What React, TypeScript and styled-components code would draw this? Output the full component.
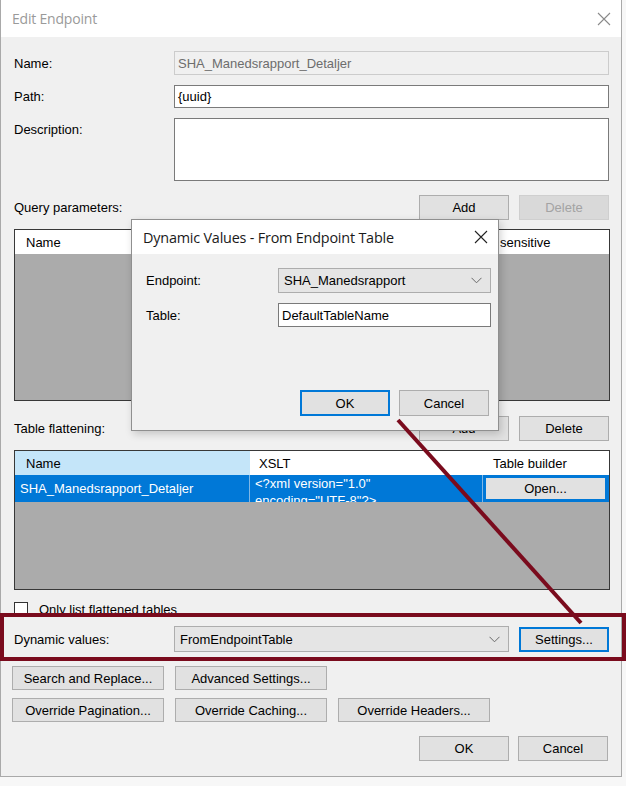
import React from "react";
import styled, { createGlobalStyle, css } from "styled-components";

const Global = createGlobalStyle`
  html, body { margin: 0; padding: 0; }
  body {
    background: #f7f7f7;
    font-family: "Liberation Sans", Arial, sans-serif;
    font-size: 13px;
    color: #000;
    width: 626px;
    height: 786px;
    overflow: hidden;
  }
  * { box-sizing: border-box; }
`;

const Stage = styled.div`
  position: relative;
  width: 626px;
  height: 786px;
`;

const Window = styled.div`
  width: 622px;
  height: 777px;
  background: #f0f0f0;
  border: 1px solid #a9a9a9;
  border-top: none;
  display: flex;
  flex-direction: column;
`;

const TitleBar = styled.div<{ $h: number }>`
  height: ${(p) => p.$h}px;
  background: #ffffff;
  display: flex;
  align-items: center;
  justify-content: space-between;
  padding: 0 10px 0 11px;
  flex-shrink: 0;
`;

const TitleText = styled.div<{ $dim?: boolean }>`
  font-family: "Open Sans", "Noto Sans", sans-serif;
  font-size: ${(p) => (p.$dim ? 14 : 14.4)}px;
  color: ${(p) => (p.$dim ? "#9a9a9a" : "#1a1a1a")};
  letter-spacing: -0.2px;
`;

const Body = styled.div`
  padding: 14px 12px 0 13px;
  display: flex;
  flex-direction: column;
`;

const FieldGrid = styled.div`
  display: grid;
  grid-template-columns: 160px 1fr;
  row-gap: 10px;
  align-items: center;
`;

const Label = styled.div<{ $top?: boolean }>`
  align-self: ${(p) => (p.$top ? "start" : "center")};
  padding-top: ${(p) => (p.$top ? "4px" : "0")};
`;

const TextBox = styled.div<{ $h: number; $disabled?: boolean }>`
  height: ${(p) => p.$h}px;
  border: 1px solid ${(p) => (p.$disabled ? "#cccccc" : "#7a7a7a")};
  background: ${(p) => (p.$disabled ? "#f0f0f0" : "#ffffff")};
  color: ${(p) => (p.$disabled ? "#6d6d6d" : "#000")};
  padding: 0 3px;
  display: flex;
  align-items: center;
  white-space: nowrap;
  overflow: hidden;
`;

const SectionHeader = styled.div<{ $mt: number }>`
  margin-top: ${(p) => p.$mt}px;
  display: flex;
  align-items: center;
  justify-content: space-between;
`;

const ButtonGroup = styled.div<{ $gap?: number }>`
  display: flex;
  gap: ${(p) => p.$gap ?? 10}px;
`;

const Button = styled.div<{ $w: number; $h?: number; $focus?: boolean; $disabled?: boolean }>`
  width: ${(p) => p.$w}px;
  height: ${(p) => p.$h ?? 25}px;
  background: #e1e1e1;
  border: 1px solid #adadad;
  display: flex;
  align-items: center;
  justify-content: center;
  white-space: nowrap;
  color: #000;
  ${(p) =>
    p.$focus &&
    css`
      border: 2px solid #0078d7;
    `}
  ${(p) =>
    p.$disabled &&
    css`
      background: #d9d9d9;
      border-color: #cfcfcf;
      color: #a3a3a3;
    `}
`;

const ListBox = styled.div<{ $mt: number; $h: number }>`
  margin-top: ${(p) => p.$mt}px;
  height: ${(p) => p.$h}px;
  margin-right: -1px;
  border: 1px solid #383838;
  background: #ababab;
  display: flex;
  flex-direction: column;
  overflow: hidden;
`;

const HeaderRow = styled.div`
  display: flex;
  height: 24px;
  background: #ffffff;
  flex-shrink: 0;
`;

const HeaderCell = styled.div<{ $w: number; $pl: number; $active?: boolean }>`
  width: ${(p) => p.$w}px;
  flex-shrink: 0;
  padding-left: ${(p) => p.$pl}px;
  display: flex;
  align-items: center;
  background: ${(p) => (p.$active ? "#c4e5f9" : "#ffffff")};
  white-space: nowrap;
  overflow: hidden;
`;

const DataRow = styled.div`
  display: flex;
  height: 27px;
  background: #0078d7;
  color: #ffffff;
  flex-shrink: 0;
`;

const DataCell = styled.div<{ $w: number; $pl: number; $sep?: boolean }>`
  width: ${(p) => p.$w}px;
  flex-shrink: 0;
  padding-left: ${(p) => p.$pl}px;
  display: flex;
  align-items: center;
  border-right: ${(p) => (p.$sep ? "1px solid #7fb7e6" : "none")};
  white-space: nowrap;
  overflow: hidden;
`;

const XsltCell = styled.div<{ $w: number }>`
  width: ${(p) => p.$w}px;
  flex-shrink: 0;
  padding-left: 5px;
  line-height: 17px;
  border-right: 1px solid #7fb7e6;
  overflow: hidden;
  white-space: pre;
`;

const CellButtonWrap = styled.div`
  flex: 1;
  padding: 1px;
  display: flex;
`;

const CheckRow = styled.div`
  margin-top: 11px;
  height: 16px;
  display: flex;
  align-items: center;
  gap: 11px;
`;

const CheckBox = styled.div`
  width: 14px;
  height: 14px;
  border: 1px solid #333333;
  background: #ffffff;
`;

const DynamicRow = styled.div`
  margin-top: 9px;
  display: grid;
  grid-template-columns: 150px 335px 90px;
  column-gap: 10px;
  align-items: center;
`;

const Combo = styled.div<{ $h: number }>`
  height: ${(p) => p.$h}px;
  background: #e5e5e5;
  border: 1px solid #adadad;
  display: flex;
  align-items: center;
  justify-content: space-between;
  padding: 0 8px 0 5px;
  white-space: nowrap;
`;

const ActionRow = styled.div<{ $mt: number }>`
  margin-top: ${(p) => p.$mt}px;
  margin-left: -2px;
  display: flex;
  gap: 11px;
`;

const FooterRow = styled.div`
  margin-top: 14px;
  display: flex;
  justify-content: flex-end;
  gap: 9px;
  padding-right: 1px;
`;

/* Child dialog */
const Dialog = styled.div`
  position: absolute;
  left: 131px;
  top: 219px;
  width: 368px;
  height: 212px;
  background: #f0f0f0;
  border: 1px solid #8f8f8f;
  box-shadow: 2px 3px 8px rgba(0, 0, 0, 0.18);
  display: flex;
  flex-direction: column;
  z-index: 5;
`;

const DialogBody = styled.div`
  flex: 1;
  padding: 14px 7px 14px 14px;
  display: flex;
  flex-direction: column;
`;

const DialogGrid = styled.div`
  display: grid;
  grid-template-columns: 132px 1fr;
  row-gap: 10px;
  align-items: center;
`;

const DialogFooter = styled.div`
  margin-top: auto;
  display: flex;
  justify-content: flex-end;
  gap: 9px;
  padding-right: 2px;
`;

const Overlay = styled.svg`
  position: absolute;
  left: 0;
  top: 0;
  pointer-events: none;
  z-index: 10;
`;

const CloseIcon = ({ color }: { color: string }) => (
  <svg width="14" height="14" viewBox="0 0 14 14">
    <path d="M1 1 L13 13 M13 1 L1 13" stroke={color} strokeWidth="1.1" fill="none" />
  </svg>
);

const Chevron = () => (
  <svg width="11" height="7" viewBox="0 0 11 7">
    <path d="M0.5 0.8 L5.5 5.8 L10.5 0.8" stroke="#6a6a6a" strokeWidth="1" fill="none" />
  </svg>
);

export default function App() {
  return (
    <Stage>
      <Global />
      <Window>
        <TitleBar $h={37}>
          <TitleText $dim>Edit Endpoint</TitleText>
          <CloseIcon color="#8a8a8a" />
        </TitleBar>
        <Body>
          <FieldGrid>
            <Label>Name:</Label>
            <TextBox $h={24} $disabled>SHA_Manedsrapport_Detaljer</TextBox>
            <Label>Path:</Label>
            <TextBox $h={23}>{"{uuid}"}</TextBox>
            <Label $top>Description:</Label>
            <TextBox $h={63} />
          </FieldGrid>

          <SectionHeader $mt={14}>
            <div>Query parameters:</div>
            <ButtonGroup>
              <Button $w={90}>Add</Button>
              <Button $w={90} $disabled>
                Delete
              </Button>
            </ButtonGroup>
          </SectionHeader>
          <ListBox $mt={9} $h={172}>
            <HeaderRow>
              <HeaderCell $w={180} $pl={11}>Name</HeaderCell>
              <HeaderCell $w={271} $pl={8} />
              <HeaderCell $w={144} $pl={0}>Case sensitive</HeaderCell>
            </HeaderRow>
          </ListBox>

          <SectionHeader $mt={15}>
            <div>Table flattening:</div>
            <ButtonGroup>
              <Button $w={90}>Add</Button>
              <Button $w={90}>Delete</Button>
            </ButtonGroup>
          </SectionHeader>
          <ListBox $mt={9} $h={140}>
            <HeaderRow>
              <HeaderCell $w={235} $pl={11} $active>
                Name
              </HeaderCell>
              <HeaderCell $w={233} $pl={9}>XSLT</HeaderCell>
              <HeaderCell $w={126} $pl={10}>Table builder</HeaderCell>
            </HeaderRow>
            <DataRow>
              <DataCell $w={235} $pl={5} $sep>
                SHA_Manedsrapport_Detaljer
              </DataCell>
              <XsltCell $w={233}>{'<?xml version="1.0"\nencoding="UTF-8"?>'}</XsltCell>
              <CellButtonWrap>
                <Button $w={123} $h={25} $focus>
                  Open...
                </Button>
              </CellButtonWrap>
            </DataRow>
          </ListBox>

          <CheckRow>
            <CheckBox />
            <div>Only list flattened tables</div>
          </CheckRow>

          <DynamicRow>
            <div>Dynamic values:</div>
            <Combo $h={26}>
              <span>FromEndpointTable</span>
              <Chevron />
            </Combo>
            <Button $w={90} $h={25} $focus>
              Settings...
            </Button>
          </DynamicRow>

          <ActionRow $mt={14}>
            <Button $w={152} $h={24}>Search and Replace...</Button>
            <Button $w={152} $h={24}>Advanced Settings...</Button>
          </ActionRow>
          <ActionRow $mt={8}>
            <Button $w={152} $h={24}>Override Pagination...</Button>
            <Button $w={152} $h={24}>Override Caching...</Button>
            <Button $w={152} $h={24}>Override Headers...</Button>
          </ActionRow>

          <FooterRow>
            <Button $w={90}>OK</Button>
            <Button $w={90}>Cancel</Button>
          </FooterRow>
        </Body>
      </Window>

      <Dialog>
        <TitleBar $h={34}>
          <TitleText>Dynamic Values - From Endpoint Table</TitleText>
          <CloseIcon color="#222222" />
        </TitleBar>
        <DialogBody>
          <DialogGrid>
            <div>Endpoint:</div>
            <Combo $h={25}>
              <span>SHA_Manedsrapport</span>
              <Chevron />
            </Combo>
            <div>Table:</div>
            <TextBox $h={24}>DefaultTableName</TextBox>
          </DialogGrid>
          <DialogFooter>
            <Button $w={90} $h={26} $focus>
              OK
            </Button>
            <Button $w={90} $h={26}>
              Cancel
            </Button>
          </DialogFooter>
        </DialogBody>
      </Dialog>

      <Overlay width={626} height={786} viewBox="0 0 626 786">
        <rect x={2} y={615} width={622} height={44} fill="none" stroke="#7a0b1d" strokeWidth={4} />
        <line x1={398} y1={420} x2={581} y2={623} stroke="#7a0b1d" strokeWidth={4} />
      </Overlay>
    </Stage>
  );
}
